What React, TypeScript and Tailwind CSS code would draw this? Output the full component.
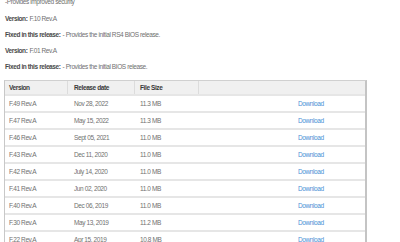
import React from "react";

const rows = [
  { version: "F.49 Rev.A", date: "Nov 28, 2022", size: "11.3 MB" },
  { version: "F.47 Rev.A", date: "May 15, 2022", size: "11.3 MB" },
  { version: "F.46 Rev.A", date: "Sept 05, 2021", size: "11.0 MB" },
  { version: "F.43 Rev.A", date: "Dec 11, 2020", size: "11.0 MB" },
  { version: "F.42 Rev.A", date: "July 14, 2020", size: "11.0 MB" },
  { version: "F.41 Rev.A", date: "Jun 02, 2020", size: "11.0 MB" },
  { version: "F.40 Rev.A", date: "Dec 06, 2019", size: "11.0 MB" },
  { version: "F.30 Rev.A", date: "May 13, 2019", size: "11.2 MB" },
  { version: "F.22 Rev.A", date: "Apr 15, 2019", size: "10.8 MB" },
];

export default function App() {
  return (
    <div
      className="h-[242px] w-[400px] overflow-hidden bg-white text-[6.5px] tracking-[-0.4px] text-[#707070]"
      style={{ fontFamily: '"Liberation Sans", Arial, sans-serif' }}
    >
      {/* Release notes */}
      <div className="-mt-[6px] pl-[5px]">
        <div className="flex h-[16.25px] items-center">-Provides improved security</div>
        <div className="flex h-[16.25px] items-center">
          <span className="mr-[2px] font-bold text-[#4a4a4a]">Version:</span>F.10 Rev.A
        </div>
        <div className="flex h-[16.25px] items-center">
          <span className="mr-[2px] font-bold text-[#4a4a4a]">Fixed in this release:</span>- Provides the initial RS4 BIOS release.
        </div>
        <div className="flex h-[16.25px] items-center">
          <span className="mr-[2px] font-bold text-[#4a4a4a]">Version:</span>F.01 Rev.A
        </div>
        <div className="flex h-[16.25px] items-center">
          <span className="mr-[2px] font-bold text-[#4a4a4a]">Fixed in this release:</span>- Provides the initial BIOS release.
        </div>
      </div>

      {/* Downloads table */}
      <div className="ml-[4px] mt-[5px] w-[363px] border-l border-r-2 border-t border-l-[#c8c8c8] border-r-[#c4c4c4] border-t-[#d0d0d0]">
        <div className="flex h-[13px] items-center bg-[#f0f0f0] font-bold text-[#3a3a3a]">
          <div className="flex h-full w-[63px] items-center border-r border-[#dcdcdc] pl-[4px]">Version</div>
          <div className="flex h-full w-[67px] items-center border-r border-[#dcdcdc] pl-[6px]">Release date</div>
          <div className="flex h-full w-[64px] items-center border-r border-[#dcdcdc] pl-[5px]">File Size</div>
          <div className="flex-1" />
        </div>
        {rows.map((r) => (
          <div key={r.version} className="flex h-[17px] items-center border-t-2 border-[#e6e6e6]">
            <div className="w-[63px] pl-[4px]">{r.version}</div>
            <div className="w-[67px] pl-[6px]">{r.date}</div>
            <div className="w-[64px] pl-[5px]">{r.size}</div>
            <div className="flex-1 pl-[99px] text-[#4a8fd6]">Download</div>
          </div>
        ))}
      </div>
    </div>
  );
}
